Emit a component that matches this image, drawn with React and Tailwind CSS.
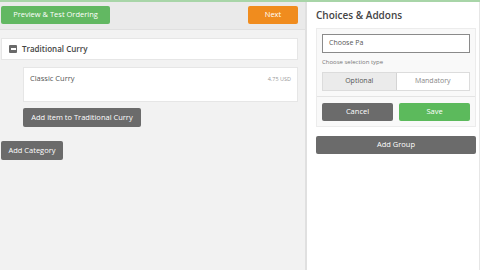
import React from "react";

export default function App() {
  return (
    <div className="w-[480px] h-[270px] flex flex-col overflow-hidden bg-white" style={{ fontFamily: '"Open Sans", "Liberation Sans", sans-serif' }}>
      <div className="h-[2px] bg-[#a8d5a8] shrink-0" />
      <div className="flex flex-1 min-h-0">
        {/* Left column */}
        <div className="w-[307px] shrink-0 flex flex-col bg-[#f2f2f2] border-r-[2px] border-[#e0e0e0]">
          <div className="h-[28px] bg-[#eaeaea] border-b border-[#e0e0e0] flex items-center justify-between pl-[1px] pr-[7px] pb-[2px]">
            <div className="w-[109px] h-[18px] rounded-[2px] bg-[#62b862] text-white text-[7.5px] flex items-center justify-center">Preview &amp; Test Ordering</div>
            <div className="w-[50px] h-[18px] rounded-[2px] bg-[#f08c1e] text-white text-[7.5px] flex items-center justify-center">Next</div>
          </div>
          <div className="pl-[1px] pr-[7px] pt-[8px] flex flex-col">
            <div className="h-[22px] bg-white border border-[#e6e6e6] flex items-center pl-[7px] gap-[5px]">
              <div className="w-[8px] h-[8px] bg-[#6a6a6a] rounded-[1px] flex items-center justify-center">
                <div className="w-[5px] h-[1.5px] bg-white" />
              </div>
              <span className="text-[8px] font-semibold text-[#444]">Traditional Curry</span>
            </div>
            <div className="ml-[22px] mt-[7px] h-[35px] bg-white border border-[#e6e6e6] flex justify-between items-start px-[6px] pt-[5px]">
              <span className="text-[7.5px] text-[#555]">Classic Curry</span>
              <span className="text-[5.5px] text-[#999] pt-[2px]">4.75 USD</span>
            </div>
            <div className="ml-[22px] mt-[6px] w-[118px] h-[19px] rounded-[2px] bg-[#6b6b6b] text-white text-[7.5px] flex items-center justify-center">Add item to Traditional Curry</div>
            <div className="mt-[14px] w-[62px] h-[19px] rounded-[2px] bg-[#6b6b6b] text-white text-[7.5px] flex items-center justify-center">Add Category</div>
          </div>
        </div>
        {/* Right panel */}
        <div className="flex-1 flex flex-col pl-[9px] pr-[3px] border-r border-[#e6e6e6]">
          <div className="h-[26px] flex items-center text-[10px] font-semibold text-[#444]">Choices &amp; Addons</div>
          <div className="bg-[#f9f9f9] border border-[#ececec] flex flex-col">
            <div className="px-[5px] pt-[5px] pb-[5px] flex flex-col">
              <div className="h-[19px] bg-white border border-[#8a8a8a] flex items-center px-[6px] text-[7px] text-[#555]">Choose Pa</div>
              <div className="mt-[5px] text-[6px] leading-[8px] text-[#777]">Choose selection type</div>
              <div className="mt-[6px] h-[19px] flex border border-[#dcdcdc]">
                <div className="flex-1 bg-[#ebebeb] border-r border-[#d4d4d4] flex items-center justify-center text-[7px] text-[#555]">Optional</div>
                <div className="flex-1 bg-white flex items-center justify-center text-[7px] text-[#888]">Mandatory</div>
              </div>
            </div>
            <div className="border-t border-[#e4e4e4] px-[5px] pt-[6px] pb-[5px] flex gap-[6px]">
              <div className="flex-1 h-[18px] rounded-[2px] bg-[#6b6b6b] text-white text-[7.5px] flex items-center justify-center">Cancel</div>
              <div className="flex-1 h-[18px] rounded-[2px] bg-[#5cba5c] text-white text-[7.5px] flex items-center justify-center">Save</div>
            </div>
          </div>
          <div className="mt-[9px] h-[18px] rounded-[2px] bg-[#6b6b6b] text-white text-[7.5px] flex items-center justify-center">Add Group</div>
        </div>
      </div>
    </div>
  );
}
